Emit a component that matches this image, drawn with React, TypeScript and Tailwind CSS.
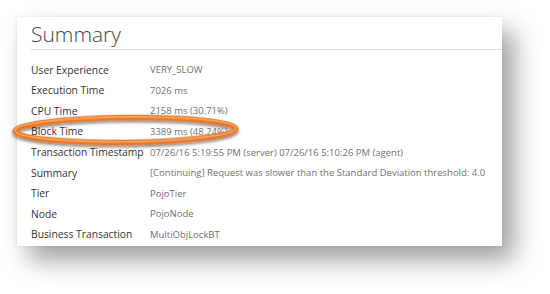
const rows: [string, string][] = [
  ["User Experience", "VERY_SLOW"],
  ["Execution Time", "7026 ms"],
  ["CPU Time", "2158 ms (30.71%)"],
  ["Block Time", "3389 ms (48.24%)"],
  ["Transaction Timestamp", "07/26/16 5:19:55 PM (server) 07/26/16 5:10:26 PM (agent)"],
  ["Summary", "[Continuing] Request was slower than the Standard Deviation threshold: 4.0"],
  ["Tier", "PojoTier"],
  ["Node", "PojoNode"],
  ["Business Transaction", "MultiObjLockBT"],
];

const App = () => {
  return (
    <div className="relative w-[550px] h-[294px] bg-white overflow-hidden font-['Open_Sans',sans-serif]">
      <div className="pt-[17px] pl-[17px]">
        <div className="w-[485px] h-[229px] bg-white shadow-[12px_14px_24px_rgba(0,0,0,0.38),-1px_0_3px_rgba(0,0,0,0.08)]">
          <div className="ml-[14px] h-[33px] border-b border-[#dcdcdc] flex items-center">
            <h1 className="text-[21px] font-light text-[#444] leading-none pt-[2px]">Summary</h1>
          </div>
          <div className="pl-[14px] pt-[10px]">
            {rows.map(([label, value]) => (
              <div key={label} className="flex items-center h-[20.6px]">
                <div className="w-[119px] shrink-0 text-[10.3px] text-[#333] whitespace-nowrap">{label}</div>
                <div className="text-[9.5px] text-[#707070] whitespace-nowrap">{value}</div>
              </div>
            ))}
          </div>
        </div>
      </div>
      <svg className="absolute left-0 top-0" width="550" height="294" viewBox="0 0 550 294">
        <defs>
          <filter id="sh" x="-10%" y="-50%" width="120%" height="200%">
            <feDropShadow dx="0" dy="2" stdDeviation="1.5" floodColor="#000" floodOpacity="0.5" />
          </filter>
        </defs>
        <g filter="url(#sh)" transform="rotate(-0.6 125 129)">
          <ellipse cx="125.5" cy="130" rx="110.5" ry="12.5" fill="none" stroke="#e8772a" strokeWidth="5.5" />
          <ellipse cx="125.5" cy="129.3" rx="110.5" ry="12.5" fill="none" stroke="#f8ad66" strokeWidth="1.8" opacity="0.85" />
        </g>
      </svg>
    </div>
  );
};

export default App;
